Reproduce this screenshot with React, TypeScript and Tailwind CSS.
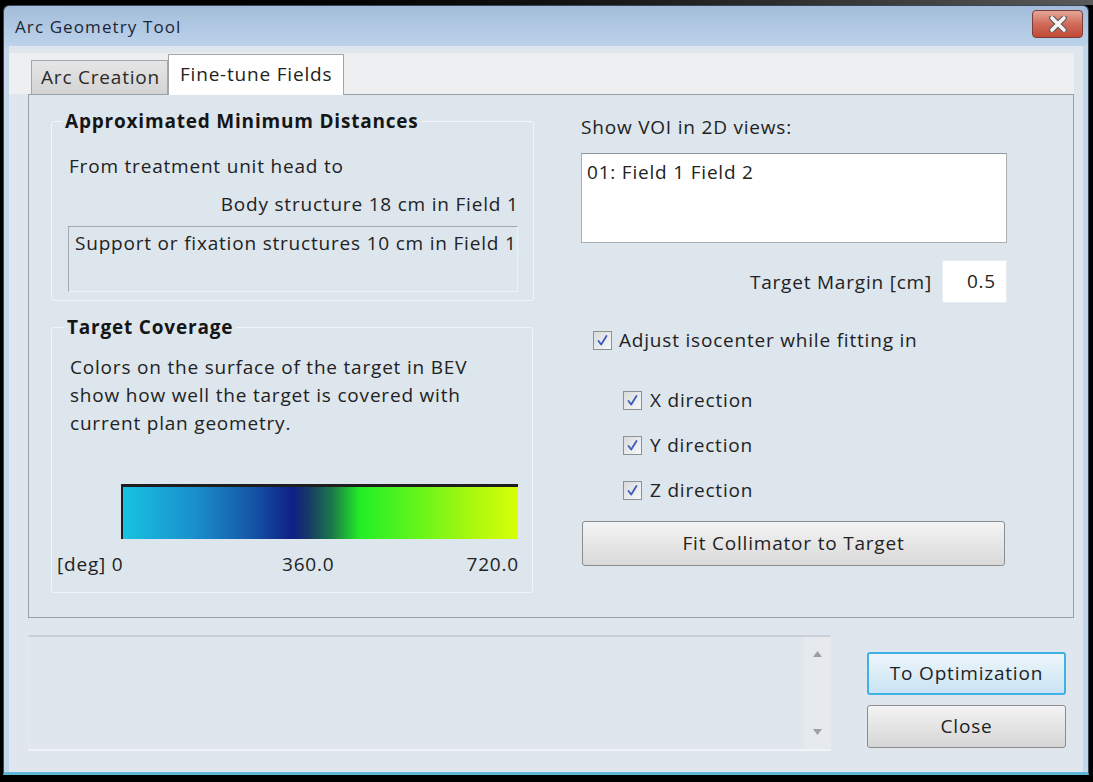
import React from "react";

const font = "font-['Open_Sans','Noto_Sans',sans-serif]";

const CheckBox = () => (
  <span className="w-[19px] h-[19px] shrink-0 border border-[#8e9093] bg-linear-to-br from-[#d8dadc] to-[#f7f8f9] flex items-center justify-center">
    <svg width="13" height="13" viewBox="0 0 13 13">
      <path d="M2.5 7 L5.2 10.5 L10.5 2" stroke="#3e5bb8" strokeWidth="1.8" fill="none" strokeLinecap="round" strokeLinejoin="round" />
    </svg>
  </span>
);

const CloseX = () => (
  <svg width="22" height="16" viewBox="0 0 22 16">
    <path d="M5 2 L17 14 M17 2 L5 14" stroke="#6b5a5a" strokeWidth="6" strokeLinecap="round" />
    <path d="M5 2 L17 14 M17 2 L5 14" stroke="#f4f4f4" strokeWidth="3.6" strokeLinecap="round" />
  </svg>
);

const ArrowUp = () => (
  <svg width="9" height="6" viewBox="0 0 9 6"><path d="M0 6 L4.5 0 L9 6 Z" fill="#9aa0a6" /></svg>
);
const ArrowDown = () => (
  <svg width="9" height="6" viewBox="0 0 9 6"><path d="M0 0 L4.5 6 L9 0 Z" fill="#9aa0a6" /></svg>
);

const App = () => {
  return (
    <div className={`w-[1093px] h-[782px] bg-black overflow-hidden flex flex-col ${font} text-[19px] tracking-[0.8px] text-[#222]`}>
      {/* backdrop strip above the window */}
      <div className="h-[5px] shrink-0 bg-linear-to-r from-black via-[#111] to-[#5a5a5a]" />

      <div className="pl-[3px]">
        {/* Window */}
        <div className="w-[1086px] h-[770px] flex flex-col rounded-t-[6px] border border-[#3a4654] border-b-[3px] border-b-[#5fb7d8] overflow-hidden">
          {/* Title bar */}
          <div className="h-[40px] shrink-0 flex items-center justify-between bg-linear-to-b from-[#a3bcda] to-[#bcd3eb] pl-[11px] pr-[5px]">
            <span className="text-[17px] tracking-[1.1px] text-[#1b2636] leading-none">Arc Geometry Tool</span>
            <button className="w-[51px] h-[28px] rounded-[4px] border border-[#7d3b3b] bg-linear-to-b from-[#e3a899] via-[#d06a5a] to-[#c24a35] flex items-center justify-center mb-[4px]">
              <CloseX />
            </button>
          </div>

          {/* Client */}
          <div className="flex-1 flex flex-col bg-[#dfe6ee] border-x-[5px] border-[#c4d6ea] pr-[9px]">
            {/* Tab strip */}
            <div className="mt-[7px] h-[41px] flex items-end bg-[#eeeff1] pl-[22px]">
              <div className="h-[34px] w-[137px] flex items-center pl-[9px] border border-b-0 border-[#a4a7aa] bg-linear-to-b from-[#e6e6e6] to-[#d3d3d3] text-[#2a2a2a] whitespace-nowrap">
                Arc Creation
              </div>
              <div className="relative z-10 -mb-px h-[41px] w-[176px] flex items-center pl-[11px] pb-[2px] border border-b-0 border-[#a4a7aa] bg-white whitespace-nowrap">
                Fine-tune Fields
              </div>
            </div>

            {/* Tab panel */}
            <div className="ml-[19px] h-[524px] flex border border-[#9aa1a8] bg-[#dde5ed] pl-[22px]">
              {/* Left column */}
              <div className="w-[482px] pt-[14px] flex flex-col">
                <fieldset className="border border-[#f3f6f9] rounded-[3px] pb-[8px]">
                  <legend className="ml-[10px] px-[3px] font-bold text-[#151515] leading-[24px]">Approximated Minimum Distances</legend>
                  <div className="pt-[19px] pl-[17px] leading-[28px]">From treatment unit head to</div>
                  <div className="pr-[14px] text-right leading-[28px] mt-[10px]">Body structure 18 cm in Field 1</div>
                  <div className="mt-[8px] ml-[16px] mr-[15px] h-[66px] border border-[#a3a8ad] border-r-[#eef2f5] border-b-[#eef2f5] pl-[6px] pt-[2px] leading-[28px] whitespace-nowrap">
                    Support or fixation structures 10 cm in Field 1
                  </div>
                </fieldset>

                <fieldset className="mt-[14px] border border-[#f3f6f9] rounded-[3px] pb-[14px]">
                  <legend className="ml-[12px] px-[3px] font-bold text-[#151515] leading-[24px]">Target Coverage</legend>
                  <div className="pt-[14px] pl-[18px] leading-[28px] whitespace-nowrap">
                    Colors on the surface of the target in BEV<br />
                    show how well the target is covered with<br />
                    current plan geometry.
                  </div>
                  <div className="mt-[47px] ml-[69px] mr-[14px] h-[55px] border-t-[3px] border-l-2 border-[#1e1e1e] bg-[linear-gradient(to_right,#18c2e2_0%,#1a8fcb_18%,#1559a8_32%,#101f86_43%,#163a66_47%,#1b7a4a_53%,#22ee26_60%,#58f41e_72%,#a8f80e_88%,#d8ff08_100%)]" />
                  <div className="mt-[11px] ml-[5px] flex leading-[28px]">
                    <span className="w-[225px]">[deg] 0</span>
                    <span>360.0</span>
                    <span className="ml-auto mr-[13px]">720.0</span>
                  </div>
                </fieldset>
              </div>

              {/* Right column */}
              <div className="ml-[48px] w-[426px] pt-[18px] flex flex-col">
                <div className="leading-[28px]">Show VOI in 2D views:</div>
                <div className="mt-[12px] h-[90px] bg-white border border-[#a9aeb3] border-t-[#8f959b] pl-[5px] pt-[4px] leading-[28px]">
                  01: Field 1 Field 2
                </div>
                <div className="mt-[17px] flex items-center justify-end">
                  <span className="leading-[28px] mr-[10px]">Target Margin [cm]</span>
                  <div className="w-[65px] h-[43px] bg-white border border-[#e8ecf0] flex items-center justify-end pr-[10px]">0.5</div>
                </div>
                <div className="mt-[23px] ml-[12px] flex items-center gap-[7px] leading-[28px]">
                  <CheckBox />
                  <span>Adjust isocenter while fitting in</span>
                </div>
                <div className="mt-[32px] ml-[42px] flex flex-col gap-[17px]">
                  <div className="flex items-center gap-[8px] leading-[28px]"><CheckBox /><span>X direction</span></div>
                  <div className="flex items-center gap-[8px] leading-[28px]"><CheckBox /><span>Y direction</span></div>
                  <div className="flex items-center gap-[8px] leading-[28px]"><CheckBox /><span>Z direction</span></div>
                </div>
                <button className="mt-[17px] ml-px w-[423px] h-[45px] rounded-[3px] border border-[#8a8c8e] bg-linear-to-b from-[#f4f4f4] to-[#d9d9d9] text-[#222] tracking-[0.8px]">
                  Fit Collimator to Target
                </button>
              </div>
            </div>

            {/* Bottom area */}
            <div className="mt-[17px] ml-[19px] flex">
              <div className="w-[803px] h-[116px] flex border-t-2 border-[#c9d0d7] border-x border-b-2 border-x-[#e7ebef] border-b-[#f1f4f7]">
                <div className="flex-1 bg-[#dfe6ee]" />
                <div className="w-[26px] bg-[#e6eaee] flex flex-col items-center justify-between py-[14px]">
                  <ArrowUp />
                  <ArrowDown />
                </div>
              </div>
              <div className="ml-[36px] mt-[17px] flex flex-col gap-[10px]">
                <button className="w-[199px] h-[43px] rounded-[3px] border-2 border-[#3fb1e2] bg-linear-to-b from-[#eef6fb] to-[#c9e3f3] text-[#222] tracking-[0.8px]">
                  To Optimization
                </button>
                <button className="w-[199px] h-[43px] rounded-[3px] border border-[#8a8c8e] bg-linear-to-b from-[#f3f3f3] to-[#d6d6d6] text-[#222] tracking-[0.8px]">
                  Close
                </button>
              </div>
            </div>
          </div>
        </div>
      </div>
    </div>
  );
};

export default App;
